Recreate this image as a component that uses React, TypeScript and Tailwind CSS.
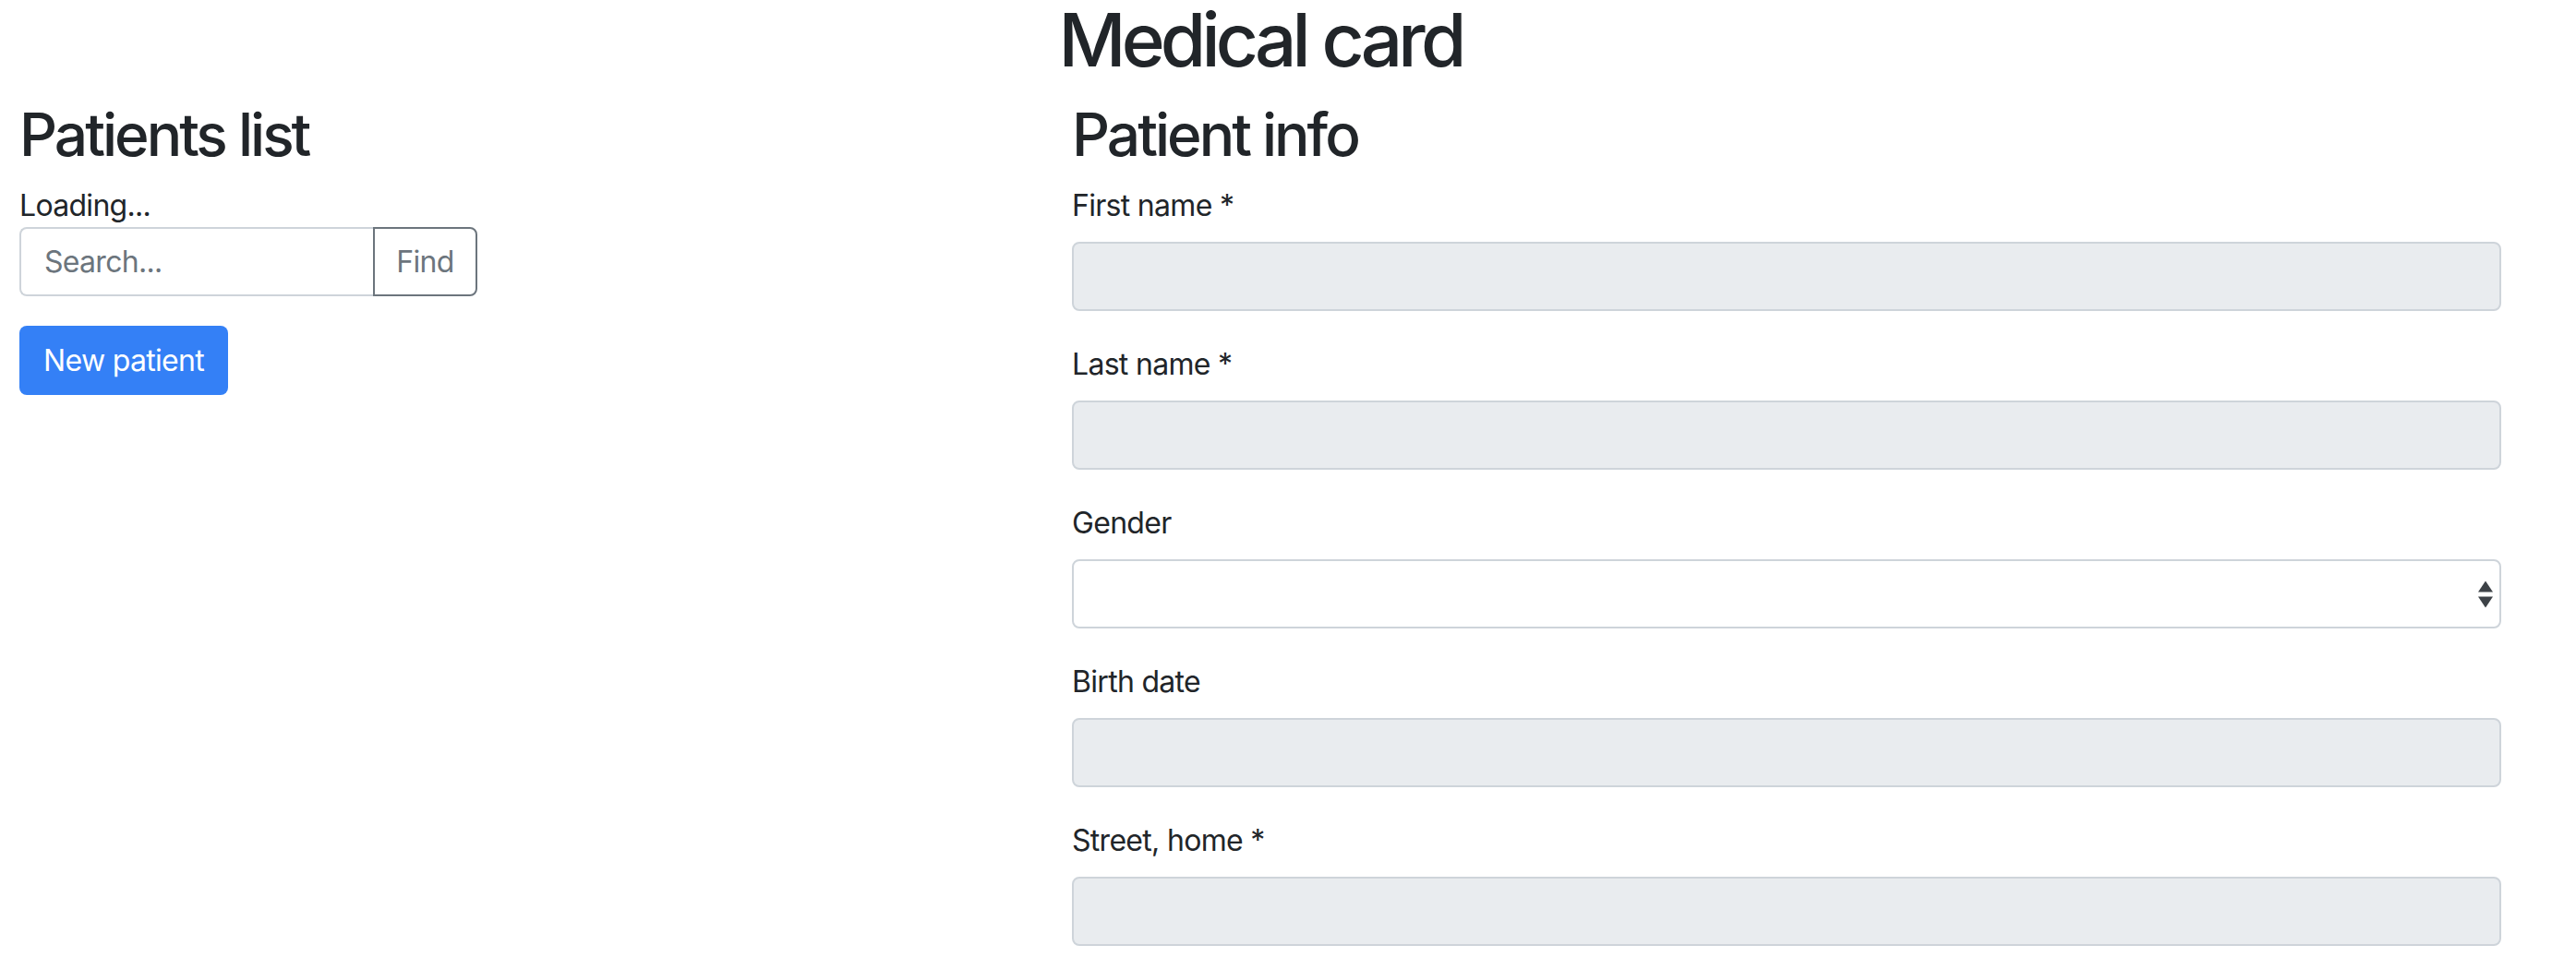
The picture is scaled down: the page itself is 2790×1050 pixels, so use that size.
import React from "react";

const fields: { label: string; kind: "ro" | "select" }[] = [
  { label: "First name *", kind: "ro" },
  { label: "Last name *", kind: "ro" },
  { label: "Gender", kind: "select" },
  { label: "Birth date", kind: "ro" },
  { label: "Street, home *", kind: "ro" },
];

function Field({ label, kind }: { label: string; kind: "ro" | "select" }) {
  return (
    <div className="mb-[33px]">
      <label className="block text-[32px] leading-[48px] mb-[15px] pt-[1px] tracking-[-0.7px]">{label}</label>
      {kind === "ro" ? (
        <input
          readOnly
          className="block w-full h-[75px] bg-[#e9ecef] border-2 border-[#ced4da] rounded-[8px] px-[24px] text-[32px] outline-none"
        />
      ) : (
        <div className="relative">
          <select className="block w-full h-[75px] appearance-none bg-white border-2 border-[#ced4da] rounded-[8px] px-[24px] text-[32px] outline-none">
            <option value=""></option>
          </select>
          <svg
            className="absolute right-[9px] top-1/2 -translate-y-1/2 pointer-events-none"
            width="16"
            height="29"
            viewBox="0 0 16 29"
          >
            <path d="M8 0 L16 12 L0 12 Z" fill="#3d4247" />
            <path d="M8 29 L16 17 L0 17 Z" fill="#3d4247" />
          </svg>
        </div>
      )}
    </div>
  );
}

export default function App() {
  return (
    <div className="w-[2730px] bg-white text-[#212529] font-['Inter','Liberation_Sans',sans-serif]">
      <h1 className="text-[80px] leading-[86px] font-medium text-center tracking-[-4.8px] mb-[21px]">
        Medical card
      </h1>
      <div className="flex">
        <div className="w-[1140px] shrink-0 px-[21px]">
          <h2 className="text-[64px] leading-[77px] font-medium tracking-[-3px] mb-[14px]">Patients list</h2>
          <div className="text-[32px] leading-[48px] pt-[1px] tracking-[-0.7px]">Loading...</div>
          <div className="flex w-[496px] h-[75px] -mt-[1px]">
            <input
              placeholder="Search..."
              className="flex-1 min-w-0 h-full bg-white border-2 border-r-0 border-[#ced4da] rounded-l-[8px] px-[25px] text-[32px] tracking-[-0.7px] outline-none placeholder:text-[#6c757d]"
            />
            <button className="w-[113px] h-full border-2 border-[#6c757d] rounded-r-[8px] text-[32px] tracking-[-0.7px] text-[#6c757d] bg-white">
              Find
            </button>
          </div>
          <button className="mt-[32px] h-[75px] w-[226px] rounded-[8px] bg-[#3480f6] text-white text-[32px] tracking-[-0.7px]">
            New patient
          </button>
        </div>
        <div className="flex-1 px-[21px]">
          <h2 className="text-[64px] leading-[77px] font-medium tracking-[-3px] mb-[14px]">Patient info</h2>
          {fields.map((f) => (
            <Field key={f.label} label={f.label} kind={f.kind} />
          ))}
        </div>
      </div>
    </div>
  );
}
